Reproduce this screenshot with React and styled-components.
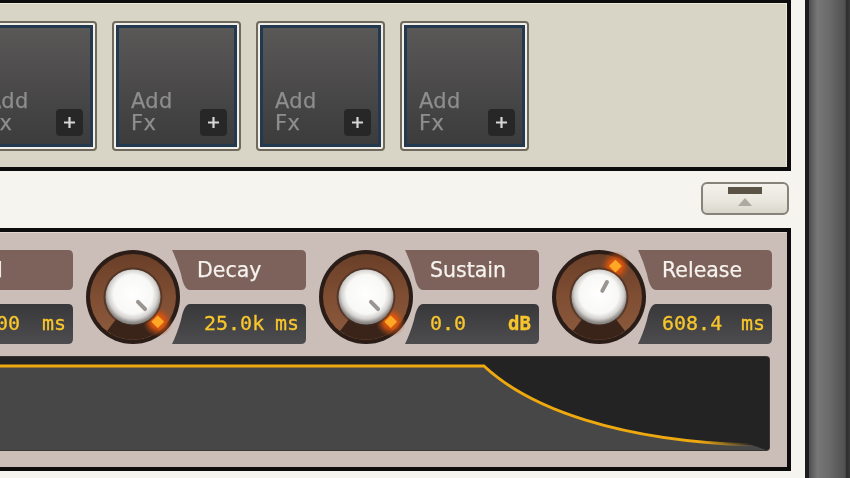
import React from "react";
import styled, { createGlobalStyle } from "styled-components";

const Global = createGlobalStyle`
  html, body { margin: 0; padding: 0; overflow: hidden; background: #f6f4ee; }
`;

const Screen = styled.div`
  width: 850px;
  height: 478px;
  display: flex;
  overflow: hidden;
  background: #f6f4ee;
  font-family: "DejaVu Sans Mono", "Liberation Mono", monospace;
  filter: blur(0.6px);
`;

const Main = styled.div`
  width: 805px;
  flex: none;
  padding-right: 14px;
  box-sizing: border-box;
  display: flex;
  flex-direction: column;
`;

const SideStrip = styled.div`
  flex: 1;
  border-left: 4px solid #1c1c1c;
  background: linear-gradient(90deg, #4f4f4f 0%, #777 20%, #6a6a6a 50%, #505050 88%, #2c2c2c 92%, #3a3a3a 100%);
`;

const FxPanel = styled.section`
  height: 171px;
  box-sizing: border-box;
  background: #d9d5c6;
  border: solid #0c0c0c;
  border-width: 3px 4px 4px 0;
  box-shadow: inset 0 1px 0 #ece8dc, inset -1px 0 0 #ece8dc;
  padding-top: 18px;
`;

const FxRow = styled.div`
  display: flex;
  gap: 15px;
  margin-left: -32px;
`;

const FxSlot = styled.div`
  width: 129px;
  height: 130px;
  box-sizing: border-box;
  flex: none;
  position: relative;
  border: 2px solid #6f6a5d;
  border-radius: 4px;
  background: #f1efe7;
  padding: 2px;
`;

const FxFace = styled.div`
  height: 100%;
  box-sizing: border-box;
  border: 3.5px solid #22394f;
  background: linear-gradient(180deg, #5a5757 0%, #3c3c3d 100%);
  display: flex;
  align-items: flex-end;
  justify-content: space-between;
  padding: 0 7px 8px 12px;
`;

const FxLabel = styled.div`
  color: #8e8e8e;
  font-family: "DejaVu Sans", sans-serif;
  font-size: 21px;
  line-height: 22px;
  letter-spacing: 0.3px;
  white-space: pre-line;
  margin-bottom: 2px;
  -webkit-text-stroke: 0.25px #8e8e8e;
`;

const AddButton = styled.div`
  width: 27px;
  height: 27px;
  border-radius: 4px;
  background: #272727;
  color: #d6d6d6;
  display: flex;
  align-items: center;
  justify-content: center;
`;

const MiddleBar = styled.div`
  height: 57px;
  box-sizing: border-box;
  padding: 11px 2px 0 0;
  display: flex;
  justify-content: flex-end;
  align-items: flex-start;
`;

const CollapseButton = styled.div`
  width: 88px;
  height: 33px;
  box-sizing: border-box;
  border: 2px solid #85837a;
  border-radius: 6px;
  background: linear-gradient(180deg, #f4f2ec 0%, #e9e6dd 60%, #d8d5cb 100%);
  display: flex;
  flex-direction: column;
  align-items: center;
  padding-top: 3px;
  gap: 4px;
`;

const CollapseBar = styled.div`
  width: 34px;
  height: 7px;
  background: #5b5346;
`;

const CollapseArrow = styled.div`
  width: 0;
  height: 0;
  border-left: 7px solid transparent;
  border-right: 7px solid transparent;
  border-bottom: 8px solid #aeaaa0;
`;

const EnvelopePanel = styled.section`
  height: 243px;
  box-sizing: border-box;
  background: #cbbdb7;
  border: solid #0c0c0c;
  border-width: 4px 4px 4px 0;
  box-shadow: inset 0 1px 0 #e0d6d0;
  padding: 18px 18px 0 0;
  display: flex;
  flex-direction: column;
  gap: 13px;
`;

const KnobRow = styled.div`
  display: flex;
  gap: 13px;
  margin-left: -147px;
`;

const Module = styled.div`
  display: flex;
  flex: none;
`;

const KnobWrap = styled.div`
  width: 94px;
  height: 94px;
  flex: none;
  position: relative;
  z-index: 1;
`;

const Fields = styled.div`
  width: 134px;
  margin-left: -8px;
  display: flex;
  flex-direction: column;
  gap: 14px;
`;

const NameField = styled.div`
  height: 40px;
  box-sizing: border-box;
  background: #7c625a;
  color: #f6f2ee;
  font-family: "DejaVu Sans", sans-serif;
  font-size: 20.5px;
  line-height: 40px;
  padding-left: ${(p) => p.$indent}px;
  -webkit-text-stroke: 0.25px #f6f2ee;
  clip-path: path("M0 0H129Q134 0 134 5V35Q134 40 129 40H18Q12 40 9 24Q5 10 0 0Z");
`;

const ValueField = styled.div`
  height: 40px;
  box-sizing: border-box;
  background: linear-gradient(180deg, #38383a 0%, #4d4d4f 100%);
  color: #f8c62c;
  font-size: 20px;
  line-height: 39px;
  padding: 0 7px 0 ${(p) => p.$indent}px;
  display: flex;
  justify-content: space-between;
  white-space: pre;
  -webkit-text-stroke: 0.3px #f8c62c;
  clip-path: path("M18 0H129Q134 0 134 5V35Q134 40 129 40H0Q5 30 9 16Q12 0 18 0Z");
`;

const Unit = styled.span`
  font-size: ${(p) => p.$size}px;
  font-weight: ${(p) => p.$weight};
  margin-right: ${(p) => p.$inset}px;
`;

const Envelope = styled.div`
  height: 93px;
  border-radius: 0 3px 3px 0;
  overflow: hidden;
  background: #232323;
  box-shadow: 0 0 0 1px #3a3634;
`;

const Defs = () => (
  <defs>
    <radialGradient id="cap" cx="50%" cy="45%" r="52%">
      <stop offset="0%" stopColor="#ffffff" />
      <stop offset="68%" stopColor="#f8f8f6" />
      <stop offset="86%" stopColor="#d4d2cf" />
      <stop offset="100%" stopColor="#8b8784" />
    </radialGradient>
    <radialGradient id="led">
      <stop offset="0%" stopColor="#ff6f0c" stopOpacity="1" />
      <stop offset="50%" stopColor="#d9530e" stopOpacity=".85" />
      <stop offset="100%" stopColor="#a04a1c" stopOpacity="0" />
    </radialGradient>
    <linearGradient id="ring" x1="0" y1="0" x2="0" y2="1">
      <stop offset="0%" stopColor="#6a3f28" />
      <stop offset="50%" stopColor="#7f4e33" />
      <stop offset="100%" stopColor="#8d5b3e" />
    </linearGradient>
    <linearGradient id="trace" x1="0" y1="0" x2="1" y2="0">
      <stop offset="0%" stopColor="#eea90f" />
      <stop offset="93%" stopColor="#eea90f" />
      <stop offset="100%" stopColor="#eea90f" stopOpacity="0" />
    </linearGradient>
  </defs>
);

const Knob = ({ angle }) => {
  const rad = ((angle - 90) * Math.PI) / 180;
  const lx = 47 + 35 * Math.cos(rad);
  const ly = 47 + 35 * Math.sin(rad);
  return (
    <KnobWrap>
      <svg width="94" height="94" viewBox="0 0 94 94">
        <Defs />
        <circle cx="47" cy="47" r="47" fill="#2a1c17" />
        <circle cx="47" cy="47" r="43" fill="url(#ring)" />
        <path d="M47 47L21 81A43 43 0 0 0 73 81Z" fill="#3a2319" />
        <circle cx={lx} cy={ly} r="15" fill="url(#led)" />
        <rect x={lx - 4.5} y={ly - 4.5} width="9" height="9" fill="#ffa826" transform={`rotate(45 ${lx} ${ly})`} />
        <circle cx="47" cy="47" r="29.5" fill="#3c2a22" opacity=".6" />
        <circle cx="47" cy="47" r="27.5" fill="url(#cap)" />
        <line x1="47" y1="40" x2="47" y2="30" stroke="#9a9590" strokeWidth="4" strokeLinecap="round" transform={`rotate(${angle} 47 47)`} />
      </svg>
    </KnobWrap>
  );
};

const modules = [
  { name: "Hold", value: "100", unit: "ms", unitSize: 20, weight: 400, inset: 0, angle: 135, nameIndent: 17, valueIndent: 45 },
  { name: "Decay", value: "25.0k", unit: "ms", unitSize: 20, weight: 400, inset: 0, angle: 135, nameIndent: 25, valueIndent: 32 },
  { name: "Sustain", value: "0.0", unit: "dB", unitSize: 19, weight: 700, inset: 1, angle: 135, nameIndent: 25, valueIndent: 25 },
  { name: "Release", value: "608.4", unit: "ms", unitSize: 20, weight: 400, inset: 0, angle: 28, nameIndent: 24, valueIndent: 24 },
];

export default function App() {
  return (
    <Screen>
      <Global />
      <Main>
        <FxPanel>
          <FxRow>
            {[0, 1, 2, 3].map((i) => (
              <FxSlot key={i}>
                <FxFace>
                  <FxLabel>{"Add\nFx"}</FxLabel>
                  <AddButton>
                    <svg width="13" height="13" viewBox="0 0 13 13">
                      <path d="M6.5 1v11M1 6.5h11" stroke="currentColor" strokeWidth="2.2" />
                    </svg>
                  </AddButton>
                </FxFace>
              </FxSlot>
            ))}
          </FxRow>
        </FxPanel>
        <MiddleBar>
          <CollapseButton>
            <CollapseBar />
            <CollapseArrow />
          </CollapseButton>
        </MiddleBar>
        <EnvelopePanel>
          <KnobRow>
            {modules.map((m) => (
              <Module key={m.name}>
                <Knob angle={m.angle} />
                <Fields>
                  <NameField $indent={m.nameIndent}>{m.name}</NameField>
                  <ValueField $indent={m.valueIndent}>
                    <span>{m.value}</span>
                    <Unit $size={m.unitSize} $weight={m.weight} $inset={m.inset}>{m.unit}</Unit>
                  </ValueField>
                </Fields>
              </Module>
            ))}
          </KnobRow>
          <Envelope>
            <svg width="769" height="93" viewBox="0 0 769 93">
              <Defs />
              <path d="M0 9H484C530 52 620 84 752 88L766 93H0Z" fill="#474747" />
              <path d="M0 9H484C530 52 620 84 752 88" fill="none" stroke="url(#trace)" strokeWidth="3" />
            </svg>
          </Envelope>
        </EnvelopePanel>
      </Main>
      <SideStrip />
    </Screen>
  );
}
